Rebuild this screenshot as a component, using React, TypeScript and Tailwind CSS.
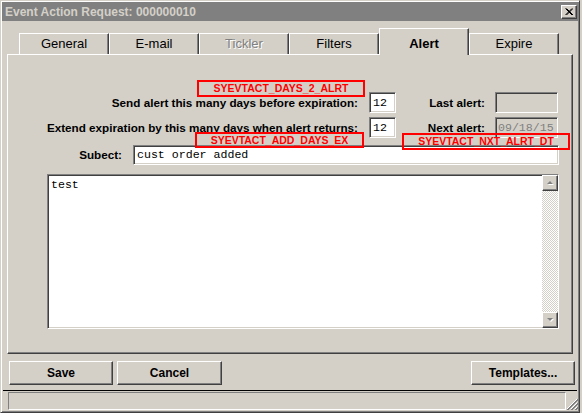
import React from "react";

const raised =
  "border border-t-white border-l-white border-r-[#404040] border-b-[#404040] shadow-[inset_-1px_-1px_0_#808080,inset_1px_1px_0_#d4d0c8]";
const sunken =
  "border border-t-[#808080] border-l-[#808080] border-r-white border-b-white shadow-[inset_1px_1px_0_#404040,inset_-1px_-1px_0_#d4d0c8]";

function Tab({ label, disabled }: { label: string; disabled?: boolean }) {
  return (
    <div
      className={
        "h-[21px] w-[90px] self-end flex items-center justify-center text-[13px] border-t border-l border-r border-t-white border-l-white border-r-[#404040] shadow-[inset_-1px_0_0_#808080] " +
        (disabled ? "text-[#808080] [text-shadow:1px_1px_0_#fff]" : "text-black")
      }
    >
      {label}
    </div>
  );
}

function SelectedTab({ label }: { label: string }) {
  return (
    <div className="relative z-10 -mb-px h-[27px] w-[90px] self-end bg-[#d4d0c8] flex justify-center pt-[5px] text-[13px] font-bold text-black border-t border-l border-r border-t-white border-l-white border-r-[#404040] shadow-[inset_-1px_0_0_#808080]">
      {label}
    </div>
  );
}

function RedBox({ text, cls }: { text: string; cls: string }) {
  return (
    <div
      className={
        "absolute border-2 border-[#ff0000] flex items-center justify-center text-[10.5px] font-bold text-[#ff0000] leading-none " +
        cls
      }
    >
      {text}
    </div>
  );
}

function Arrow({ up }: { up?: boolean }) {
  return (
    <div className={"w-[16px] h-[16px] bg-[#d4d0c8] flex items-center justify-center " + raised}>
      <svg width="9" height="6" viewBox="0 0 9 6">
        {up ? (
          <>
            <path d="M2 5 L5 2 L8 5 Z" fill="#fff" />
            <path d="M1 4 L4 1 L7 4 Z" fill="#808080" />
          </>
        ) : (
          <>
            <path d="M2 2 L5 5 L8 2 Z" fill="#fff" />
            <path d="M1 1 L4 4 L7 1 Z" fill="#808080" />
          </>
        )}
      </svg>
    </div>
  );
}

function Button({ label, cls }: { label: string; cls: string }) {
  return (
    <div
      className={
        "h-[24px] flex items-center justify-center text-[12px] font-bold text-black bg-[#d4d0c8] " +
        raised +
        " " +
        cls
      }
    >
      {label}
    </div>
  );
}

export default function App() {
  return (
    <div className="w-[582px] h-[413px] bg-[#d4d0c8] font-['Liberation_Sans',Arial,sans-serif] overflow-hidden">
      <div className="w-[580px] h-[413px] bg-[#d4d0c8] border border-t-[#d4d0c8] border-l-[#d4d0c8] border-r-[#404040] border-b-[#404040] shadow-[inset_1px_1px_0_#fff,inset_-1px_-1px_0_#808080] p-px flex flex-col">
        {/* Title bar */}
        <div className="h-[19px] bg-[#808080] flex items-center justify-between pl-[3px] pr-px">
          <span className="text-[12px] font-bold text-[#d4d0c8] leading-none">
            Event Action Request: 000000010
          </span>
          <div className={"w-[16px] h-[14px] bg-[#d4d0c8] flex items-center justify-center " + raised}>
            <svg width="8" height="7" viewBox="0 0 8 7">
              <path d="M0.5 0.5 L7 7 M1.5 0.5 L8 7 M7 0.5 L0.5 7 M8 0.5 L1.5 7" stroke="#000" strokeWidth="1" fill="none" />
            </svg>
          </div>
        </div>

        {/* Tabs */}
        <div className="mt-[7px] h-[26px] flex pl-[17px]">
          <Tab label="General" />
          <Tab label="E-mail" />
          <Tab label="Tickler" disabled />
          <Tab label="Filters" />
          <SelectedTab label="Alert" />
          <Tab label="Expire" />
        </div>

        {/* Panel */}
        <div className="relative ml-[5px] w-[566px] h-[300px] border border-t-white border-l-white border-r-[#404040] border-b-[#404040] shadow-[inset_-1px_-1px_0_#808080]">
          <div className="pt-[37px] flex flex-col">
            <div className="flex items-center h-[21px]">
              <div className="w-[350px] text-right text-[11.7px] font-bold text-black">
                Send alert this many days before expiration:
              </div>
              <div className={"ml-[11px] w-[27px] h-[21px] bg-white flex items-center pl-[3px] font-['Liberation_Mono',monospace] text-[11.6px] text-black " + sunken}>
                12
              </div>
              <div className="w-[89px] text-right text-[11.7px] font-bold text-black">Last alert:</div>
              <div className={"ml-[10px] w-[63px] h-[21px] bg-[#d4d0c8] " + sunken} />
            </div>
            <div className="mt-[4px] flex items-center h-[21px]">
              <div className="w-[350px] text-right text-[11.7px] font-bold text-black whitespace-nowrap">
                Extend expiration by this many days when alert returns:
              </div>
              <div className={"ml-[11px] w-[27px] h-[21px] bg-white flex items-center pl-[3px] font-['Liberation_Mono',monospace] text-[11.6px] text-black " + sunken}>
                12
              </div>
              <div className="w-[89px] text-right text-[11.7px] font-bold text-black">Next alert:</div>
              <div className={"ml-[10px] w-[63px] h-[21px] bg-[#d4d0c8] flex items-center pl-[2px] font-['Liberation_Mono',monospace] text-[11.6px] text-[#808080] " + sunken}>
                09/18/15
              </div>
            </div>
            <div className="mt-[7px] flex items-center h-[20px]">
              <div className="w-[114px] text-right text-[11.7px] font-bold text-black">Subect:</div>
              <div className={"ml-[11px] w-[426px] h-[20px] bg-white flex items-center pl-[3px] font-['Liberation_Mono',monospace] text-[11.6px] text-black " + sunken}>
                cust order added
              </div>
            </div>
            <div className={"mt-[9px] ml-[39px] w-[512px] h-[155px] bg-white flex " + sunken}>
              <div className="flex-1 pl-[3px] pt-[4px] font-['Liberation_Mono',monospace] text-[11.6px] text-black leading-none">
                test
              </div>
              <div className="w-[16px] flex flex-col">
                <Arrow up />
                <div className="flex-1 bg-[repeating-conic-gradient(#d4d0c8_0_25%,#ffffff_0_50%)] bg-[length:2px_2px]" />
                <Arrow />
              </div>
            </div>
          </div>

          <RedBox text="SYEVTACT_DAYS_2_ALRT" cls="left-[189px] top-[25px] w-[168px] h-[17px]" />
          <RedBox text="SYEVTACT_ADD_DAYS_EX" cls="left-[187px] top-[77px] w-[169px] h-[16px]" />
          <RedBox text="SYEVTACT_NXT_ALRT_DT" cls="left-[394px] top-[78px] w-[168px] h-[17px]" />
        </div>

        {/* Buttons */}
        <div className="mt-[7px] flex">
          <Button label="Save" cls="ml-[7px] w-[104px]" />
          <Button label="Cancel" cls="ml-[4px] w-[105px]" />
          <Button label="Templates..." cls="ml-auto mr-[3px] w-[104px]" />
        </div>

        <div className="mt-[5px] h-px bg-black mx-px" />

        {/* Status bar */}
        <div className="mt-px flex h-[18px]">
          <div className="ml-[6px] w-[560px] h-[18px] border border-t-[#808080] border-l-[#808080] border-r-white border-b-white" />
          <div className="flex-1 flex items-end justify-end">
            <svg width="12" height="12" viewBox="0 0 12 12">
              <path d="M11 1 L1 11 M11 5 L5 11 M11 9 L9 11" stroke="#fff" strokeWidth="1" />
              <path d="M12 1 L1 12 M12 2 L2 12 M12 5 L5 12 M12 6 L6 12 M12 9 L9 12 M12 10 L10 12" stroke="#808080" strokeWidth="1" />
            </svg>
          </div>
        </div>
      </div>
    </div>
  );
}
